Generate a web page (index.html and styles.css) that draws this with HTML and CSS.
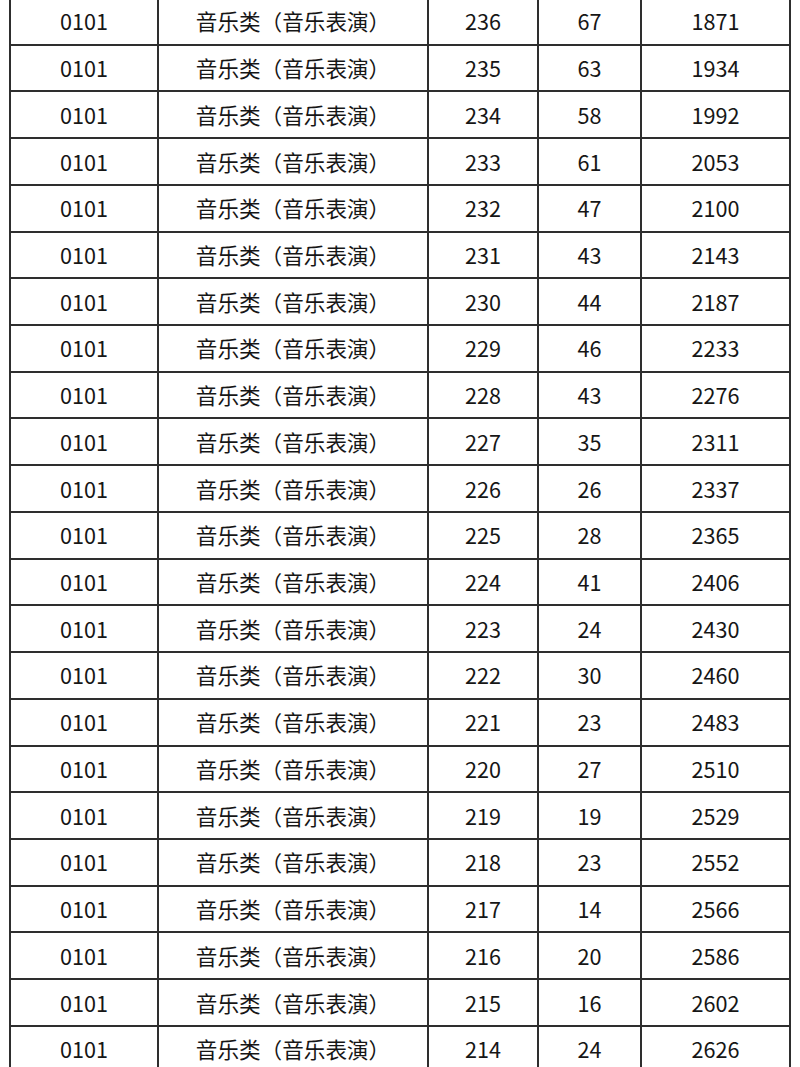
FILE: index.html
```html
<!DOCTYPE html>
<html lang="zh-CN">
<head>
<meta charset="utf-8">
<title>音乐类（音乐表演）</title>
<link rel="stylesheet" href="styles.css">
</head>
<body>
<div class="sheet">
<table class="scores">
<colgroup><col class="c1"><col class="c2"><col class="c3"><col class="c4"><col class="c5"></colgroup>
<tbody>
<tr><td>0101</td><td>音乐类（音乐表演）</td><td>236</td><td>67</td><td>1871</td></tr>
<tr><td>0101</td><td>音乐类（音乐表演）</td><td>235</td><td>63</td><td>1934</td></tr>
<tr><td>0101</td><td>音乐类（音乐表演）</td><td>234</td><td>58</td><td>1992</td></tr>
<tr><td>0101</td><td>音乐类（音乐表演）</td><td>233</td><td>61</td><td>2053</td></tr>
<tr><td>0101</td><td>音乐类（音乐表演）</td><td>232</td><td>47</td><td>2100</td></tr>
<tr><td>0101</td><td>音乐类（音乐表演）</td><td>231</td><td>43</td><td>2143</td></tr>
<tr><td>0101</td><td>音乐类（音乐表演）</td><td>230</td><td>44</td><td>2187</td></tr>
<tr><td>0101</td><td>音乐类（音乐表演）</td><td>229</td><td>46</td><td>2233</td></tr>
<tr><td>0101</td><td>音乐类（音乐表演）</td><td>228</td><td>43</td><td>2276</td></tr>
<tr><td>0101</td><td>音乐类（音乐表演）</td><td>227</td><td>35</td><td>2311</td></tr>
<tr><td>0101</td><td>音乐类（音乐表演）</td><td>226</td><td>26</td><td>2337</td></tr>
<tr><td>0101</td><td>音乐类（音乐表演）</td><td>225</td><td>28</td><td>2365</td></tr>
<tr><td>0101</td><td>音乐类（音乐表演）</td><td>224</td><td>41</td><td>2406</td></tr>
<tr><td>0101</td><td>音乐类（音乐表演）</td><td>223</td><td>24</td><td>2430</td></tr>
<tr><td>0101</td><td>音乐类（音乐表演）</td><td>222</td><td>30</td><td>2460</td></tr>
<tr><td>0101</td><td>音乐类（音乐表演）</td><td>221</td><td>23</td><td>2483</td></tr>
<tr><td>0101</td><td>音乐类（音乐表演）</td><td>220</td><td>27</td><td>2510</td></tr>
<tr><td>0101</td><td>音乐类（音乐表演）</td><td>219</td><td>19</td><td>2529</td></tr>
<tr><td>0101</td><td>音乐类（音乐表演）</td><td>218</td><td>23</td><td>2552</td></tr>
<tr><td>0101</td><td>音乐类（音乐表演）</td><td>217</td><td>14</td><td>2566</td></tr>
<tr><td>0101</td><td>音乐类（音乐表演）</td><td>216</td><td>20</td><td>2586</td></tr>
<tr><td>0101</td><td>音乐类（音乐表演）</td><td>215</td><td>16</td><td>2602</td></tr>
<tr><td>0101</td><td>音乐类（音乐表演）</td><td>214</td><td>24</td><td>2626</td></tr>
</tbody>
</table>
</div>
</body>
</html>
```
FILE: styles.css
```css
html, body {
  margin: 0;
  padding: 0;
  background: #ffffff;
}

.sheet {
  width: 800px;
  height: 1067px;
  overflow: hidden;
  padding-left: 9px;
  box-sizing: border-box;
}

.scores {
  margin-top: -3px;
  border-collapse: collapse;
  table-layout: fixed;
  width: 782px;
  font-family: "Noto Sans CJK SC", "Noto Sans", sans-serif;
  font-size: 21.6px;
  color: #161616;
}

.c1 { width: 148px; }
.c2 { width: 270px; }
.c3 { width: 110px; }
.c4 { width: 103px; }
.c5 { width: 149px; }

.scores tr {
  height: 46.73px;
}

.scores td {
  border: 2px solid #2e2e2e;
  padding: 0;
  text-align: center;
  vertical-align: middle;
  line-height: 1.2;
  white-space: nowrap;
}
```
